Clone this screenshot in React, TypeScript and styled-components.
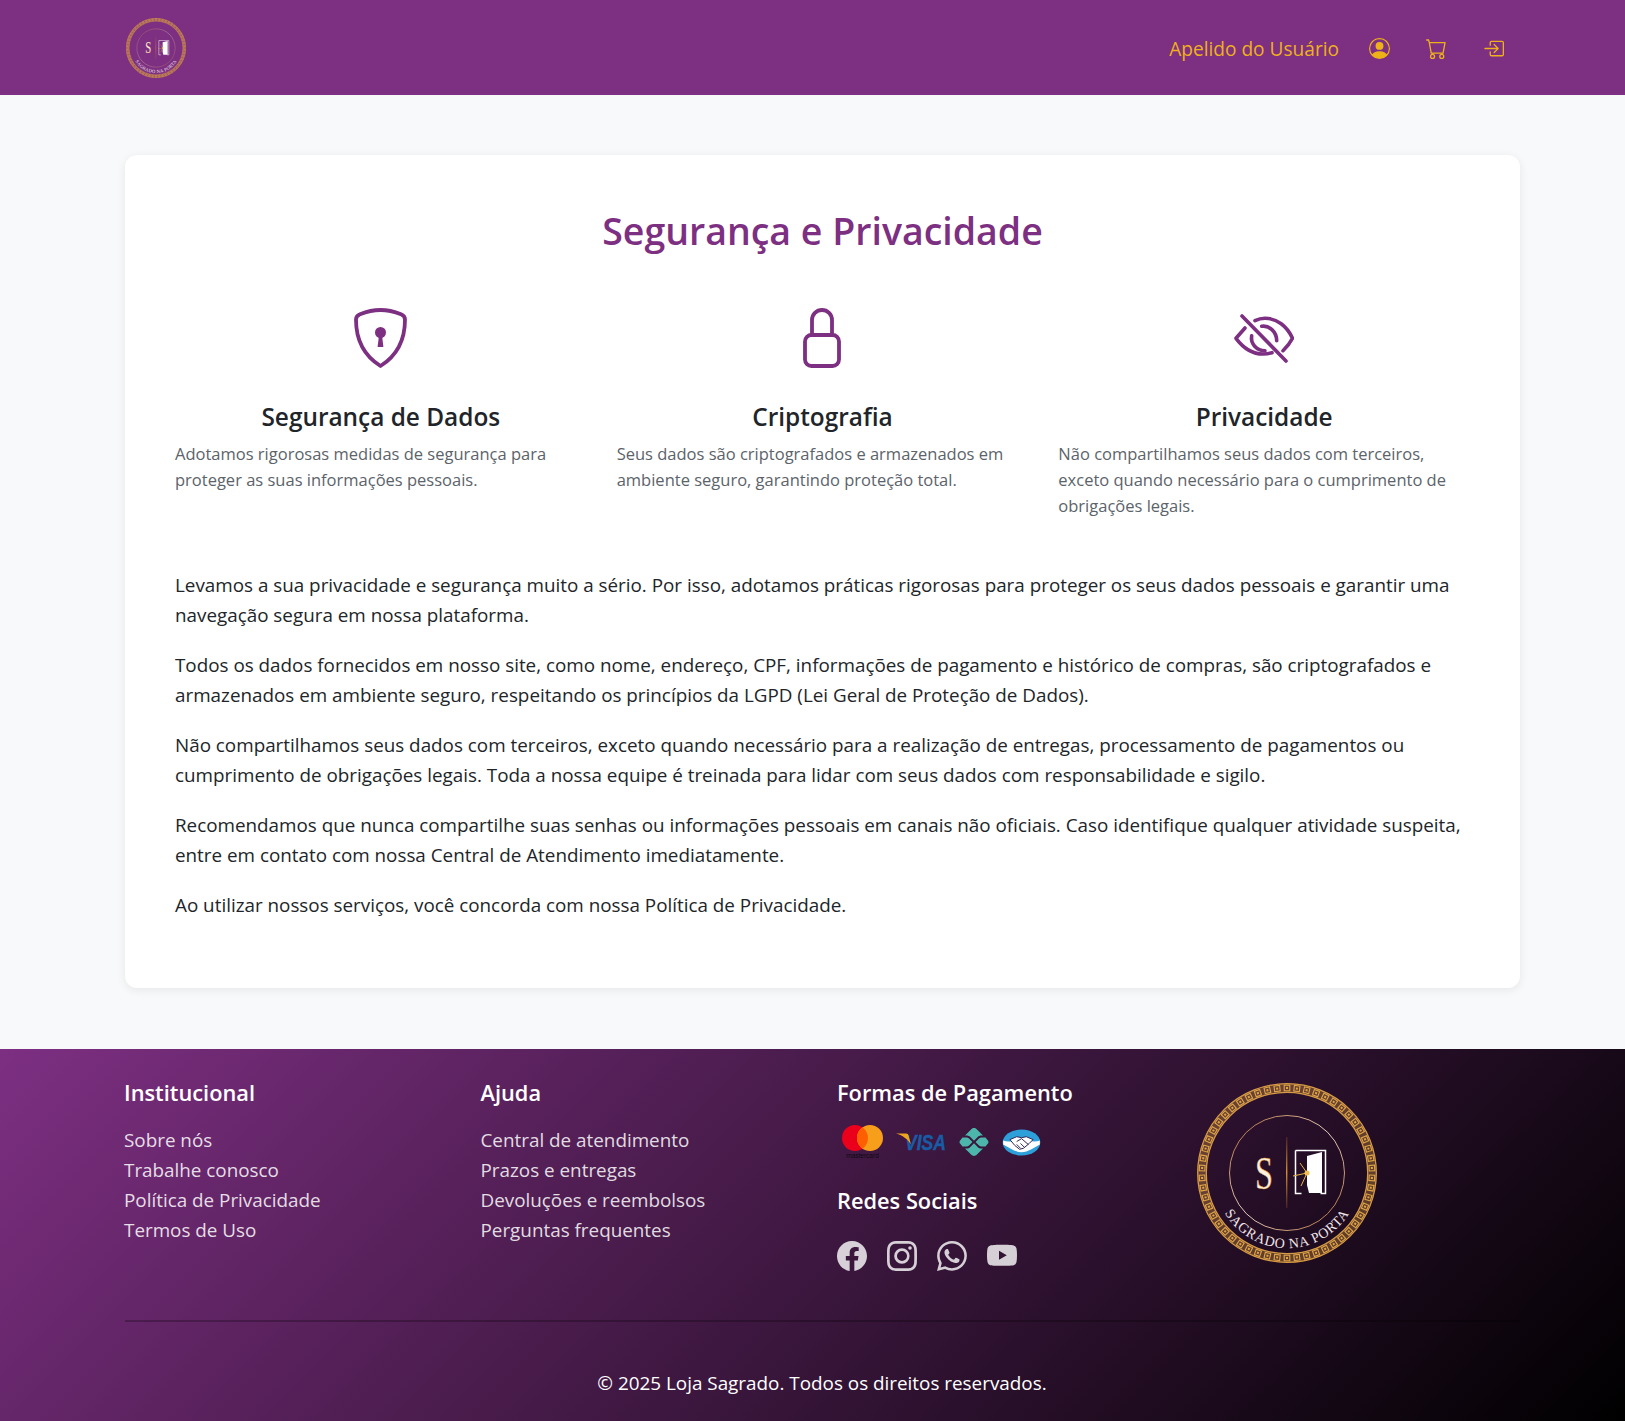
import React, { FC } from 'react';
import styled, { createGlobalStyle } from 'styled-components';
import { BsPersonCircle, BsCart, BsBoxArrowInRight, BsFacebook, BsInstagram, BsWhatsapp, BsYoutube } from 'react-icons/bs';

const GlobalStyle = createGlobalStyle`
  * { box-sizing: border-box; }
  body {
    margin: 0;
    background: #f8f9fa;
    font-family: "Open Sans", "Liberation Sans", sans-serif;
    color: #212529;
  }
`;

const Header = styled.header`
  height: 95px;
  background: #7d2f82;
  display: flex;
  align-items: center;
  justify-content: space-between;
  padding: 0 121px 0 126px;
`;

const HeaderActions = styled.div`
  display: flex;
  align-items: center;
  color: #eeb218;
  font-size: 19.1px;
  gap: 30px;
  margin-top: 2px;
`;

const HeaderIcons = styled.div`
  display: flex;
  align-items: center;
  gap: 36px;
  font-size: 21px;
`;

const Main = styled.main`
  padding: 60px 105px 61px 125px;
`;

const Card = styled.section`
  background: #fff;
  border-radius: 12px;
  box-shadow: 0 2px 10px rgba(0, 0, 0, 0.08);
  padding: 53px 50px 0;
  height: 833px;
`;

const Title = styled.h1`
  margin: 0 0 52px;
  text-align: center;
  color: #7d2f82;
  font-size: 37.5px;
  line-height: 46px;
  font-weight: 600;
`;

const Features = styled.div`
  display: grid;
  grid-template-columns: repeat(3, 1fr);
  gap: 30px;
  margin-bottom: 51px;
`;

const Feature = styled.div``;

const FeatureIcon = styled.div`
  height: 64px;
  display: flex;
  justify-content: center;
  align-items: center;
  margin-bottom: 31px;
`;

const FeatureTitle = styled.h3`
  margin: 0 0 8px;
  text-align: center;
  font-size: 24.4px;
  line-height: 32px;
  font-weight: 600;
`;

const FeatureText = styled.p`
  margin: 0;
  color: #5c636a;
  font-size: 16.5px;
  line-height: 26px;
`;

const Paragraph = styled.p`
  margin: 0 0 20px;
  font-size: 18.83px;
  line-height: 30px;
`;

const Footer = styled.footer`
  height: 372px;
  background: linear-gradient(135deg, #7d2f82, #000);
  padding: 26px 105px 0 124px;
  color: #fff;
`;

const FooterGrid = styled.div`
  display: grid;
  grid-template-columns: repeat(4, 1fr);
  column-gap: 30px;
  height: 245px;
`;

const FooterHeading = styled.h5<{ $top?: number }>`
  margin: ${(p) => p.$top ?? 0}px 0 14px;
  font-size: 21.8px;
  line-height: 36px;
  font-weight: 600;
`;

const FooterList = styled.ul`
  list-style: none;
  margin: 0;
  padding: 0;
`;

const FooterLink = styled.li`
  font-size: 18.85px;
  line-height: 30px;
  color: rgba(255, 255, 255, 0.85);
`;

const Payments = styled.div`
  display: flex;
  align-items: center;
  gap: 13px;
  padding-left: 5px;
  margin-top: 2px;
  height: 34px;
`;

const Socials = styled.div`
  display: flex;
  gap: 20px;
  font-size: 30px;
  margin-top: 22px;
  color: rgba(255, 255, 255, 0.8);
`;

const LogoCell = styled.div`
  padding-left: 3px;
  padding-top: 8px;
`;

const Divider = styled.hr`
  margin: 0 0 0 1px;
  border: 0;
  border-top: 2px solid rgba(0, 0, 0, 0.25);
`;

const Copyright = styled.p`
  margin: 0;
  padding-top: 46px;
  text-align: center;
  font-size: 18.87px;
  line-height: 30px;
`;

const LogoMark: FC<{ size: number }> = ({ size }) => {
  const squares = Array.from({ length: 54 }, (_, i) => (i * 360) / 54);
  const arcId = `logoArc${size}`;
  const ringId = `goldRing${size}`;
  const lineId = `goldLine${size}`;
  return (
    <svg width={size} height={size} viewBox="0 0 180 180">
      <defs>
        <path id={arcId} d="M27 129A73 73 0 0 0 153 129" fill="none" />
        <linearGradient id={ringId} x1="0" y1="0" x2="1" y2="1">
          <stop offset="0" stopColor="#a8642c" />
          <stop offset="0.5" stopColor="#e6d0c0" />
          <stop offset="1" stopColor="#a8642c" />
        </linearGradient>
        <linearGradient id={lineId} x1="0" y1="0" x2="0" y2="1">
          <stop offset="0" stopColor="#c87f24" stopOpacity="0.2" />
          <stop offset="0.5" stopColor="#d98e2c" />
          <stop offset="1" stopColor="#c87f24" stopOpacity="0.2" />
        </linearGradient>
      </defs>
      <circle cx="90" cy="90" r="85" fill="none" stroke="#c48a3a" strokeOpacity="0.4" strokeWidth="9" />
      <circle cx="90" cy="90" r="89.300" fill="none" stroke="#d59a45" strokeWidth="1.300" />
      <circle cx="90" cy="90" r="80.700" fill="none" stroke="#d59a45" strokeWidth="1.300" />
      {squares.map((a) => (
        <g key={a} transform={`rotate(${a} 90 90) translate(90 5)`}>
          <rect x="-2.800" y="-2.800" width="5.600" height="5.600" fill="none" stroke="#e0a548" strokeWidth="1.100" />
          <rect x="-1" y="-1" width="2" height="2" fill="#e0a548" />
        </g>
      ))}
      <circle cx="90" cy="90" r="57.500" fill="none" stroke={`url(#${ringId})`} strokeWidth="1" />
      <text x="58" y="106" fontFamily="Liberation Serif, serif" fontSize="47" fill="#fdf0e0" stroke="#d98e2c" strokeWidth="0.500" textLength="18" lengthAdjust="spacingAndGlyphs">
        S
      </text>
      <rect x="89" y="54" width="1.400" height="71" fill={`url(#${lineId})`} />
      <path d="M98.500 67.500h30v43h-5M98.500 67.500v43h6" fill="none" stroke="#fff" strokeWidth="1.500" />
      <path d="M110 73l15-4v41h-13l-2-8z" fill="#fff" />
      <path d="M96 93l14-3M103 80l7 10M104 103l6-13" stroke="#e6b64a" strokeWidth="1" />
      <circle cx="110" cy="90" r="2.500" fill="#efc04f" />
      <text fontFamily="Liberation Serif, serif" fontSize="14" fill="#efe4e6" letterSpacing="0.700">
        <textPath href={`#${arcId}`} startOffset="50%" textAnchor="middle">
          SAGRADO NA PORTA
        </textPath>
      </text>
    </svg>
  );
};

const ShieldIcon: FC = () => (
  <svg width="53" height="60" viewBox="0 0 53 60" fill="none" stroke="#7d2f82" strokeWidth="3.800">
    <path d="M26.500 2c6 0 13.500 1.500 20.500 4.300 2.400 1 4 2.700 4 5.200 0 22-8.500 36.500-24.500 46.500C10.500 48 2 33.500 2 11.500c0-2.500 1.600-4.200 4-5.200C13 3.500 20.500 2 26.500 2z" strokeLinejoin="round" />
    <circle cx="26.500" cy="24.500" r="5.500" fill="#7d2f82" stroke="none" />
    <path d="M25 27h3l1.400 12h-5.800z" fill="#7d2f82" stroke="none" strokeLinejoin="round" />
  </svg>
);

const LockIcon: FC = () => (
  <svg width="38" height="60" viewBox="0 0 38 60" fill="none" stroke="#7d2f82" strokeWidth="3.800">
    <path d="M9 27V12a10 10 0 0 1 20 0v15" />
    <rect x="2" y="27" width="34" height="31" rx="6.500" />
  </svg>
);

const EyeOffIcon: FC = () => (
  <svg width="60" height="49" viewBox="0 0 60 49" fill="none" stroke="#7d2f82" strokeWidth="3.600" strokeLinecap="round" strokeLinejoin="round">
    <path d="M11 14L2 24.300c6 8 15 15.700 27 15.700 3 0 6-.4 9-1.300" />
    <path d="M21 6.700c3-1.500 6-2.400 10-2.400 12 0 22 8 27.500 20-2 4-5 8-9.500 12.400" />
    <path d="M17.700 21.700c-1.500 8 5 15 13.300 15" />
    <path d="M27.700 12.300c7.300-1.300 15 5.500 15 14.400" />
    <path d="M8 2l44 45" />
  </svg>
);

const MastercardIcon: FC = () => (
  <svg width="41" height="34" viewBox="0 0 41 34">
    <circle cx="13" cy="13" r="13" fill="#eb001b" />
    <circle cx="28" cy="13" r="13" fill="#f79e1b" />
    <path d="M20.500 2.400a13 13 0 0 1 0 21.200a13 13 0 0 1 0-21.200z" fill="#ff5f00" />
    <text x="20.500" y="33" textAnchor="middle" fontFamily="Liberation Sans, sans-serif" fontSize="6.500" fill="#0e0812">
      mastercard
    </text>
  </svg>
);

const VisaIcon: FC = () => (
  <svg width="50" height="24" viewBox="0 0 50 24">
    <text transform="translate(9 20) scale(0.8 1)" fontFamily="Liberation Sans, sans-serif" fontStyle="italic" fontWeight="700" fontSize="22" fill="#175ca5" stroke="#175ca5" strokeWidth="0.400">
      VISA
    </text>
    <path d="M0 3.500h10c1.500 0 2.200.8 2.500 2l2.500 9C12 9.500 7 5.500 0 3.500z" fill="#f0a51e" />
  </svg>
);

const PixIcon: FC = () => (
  <svg width="30" height="30" viewBox="0 0 30 30" fill="#4db6ac">
    <path d="M15 1c1 0 2 .5 2.700 1.200L24 8.500h-1.500c-1.500 0-2.800.5-3.800 1.500L15 13.700 11.300 10c-1-1-2.300-1.500-3.800-1.500H6l6.300-6.300C13 1.500 14 1 15 1z" />
    <path d="M15 29c1 0 2-.5 2.700-1.200L24 21.500h-1.500c-1.500 0-2.800-.5-3.800-1.500L15 16.300 11.300 20c-1 1-2.300 1.500-3.800 1.500H6l6.300 6.300c.7.700 1.700 1.200 2.700 1.200z" />
    <path d="M3.500 10.500h4c1 0 1.900.4 2.500 1l3.500 3.500L10 18.500c-.6.600-1.500 1-2.500 1h-4l-2-2.400c-1.300-1.300-1.300-2.900 0-4.200z" />
    <path d="M26.500 10.500h-4c-1 0-1.900.4-2.500 1L16.500 15l3.500 3.500c.6.600 1.500 1 2.500 1h4l2-2.400c1.300-1.300 1.300-2.900 0-4.200z" />
  </svg>
);

const MercadoPagoIcon: FC = () => (
  <svg width="39" height="27" viewBox="0 0 40 28">
    <ellipse cx="20" cy="14" rx="19.500" ry="13.500" fill="#2d9fd9" />
    <path d="M1 12c6 2 11 .5 19-3 8 3.500 13 5 19 3v4c-6 3-12 8-19 8S7 19 1 16z" fill="#fff" />
    <path d="M8 11l7-3 5 1 5-1 7 3-4 4-6 5-4 1-5-4z" fill="#fff" stroke="#2a2350" strokeWidth="1" strokeLinejoin="round" />
    <path d="M15 13l5-3 7 6M19 20l-4-4M23 19l-4-4" fill="none" stroke="#2a2350" strokeWidth="1" />
  </svg>
);

const features = [
  {
    icon: <ShieldIcon />,
    title: 'Segurança de Dados',
    text: 'Adotamos rigorosas medidas de segurança para proteger as suas informações pessoais.',
  },
  {
    icon: <LockIcon />,
    title: 'Criptografia',
    text: 'Seus dados são criptografados e armazenados em ambiente seguro, garantindo proteção total.',
  },
  {
    icon: <EyeOffIcon />,
    title: 'Privacidade',
    text: 'Não compartilhamos seus dados com terceiros, exceto quando necessário para o cumprimento de obrigações legais.',
  },
];

const paragraphs = [
  'Levamos a sua privacidade e segurança muito a sério. Por isso, adotamos práticas rigorosas para proteger os seus dados pessoais e garantir uma navegação segura em nossa plataforma.',
  'Todos os dados fornecidos em nosso site, como nome, endereço, CPF, informações de pagamento e histórico de compras, são criptografados e armazenados em ambiente seguro, respeitando os princípios da LGPD (Lei Geral de Proteção de Dados).',
  'Não compartilhamos seus dados com terceiros, exceto quando necessário para a realização de entregas, processamento de pagamentos ou cumprimento de obrigações legais. Toda a nossa equipe é treinada para lidar com seus dados com responsabilidade e sigilo.',
  'Recomendamos que nunca compartilhe suas senhas ou informações pessoais em canais não oficiais. Caso identifique qualquer atividade suspeita, entre em contato com nossa Central de Atendimento imediatamente.',
  'Ao utilizar nossos serviços, você concorda com nossa Política de Privacidade.',
];

const App: FC = () => (
  <>
    <GlobalStyle />
    <Header>
      <LogoMark size={60} />
      <HeaderActions>
        <span>Apelido do Usuário</span>
        <HeaderIcons>
          <BsPersonCircle />
          <BsCart />
          <BsBoxArrowInRight />
        </HeaderIcons>
      </HeaderActions>
    </Header>
    <Main>
      <Card>
        <Title>Segurança e Privacidade</Title>
        <Features>
          {features.map((f) => (
            <Feature key={f.title}>
              <FeatureIcon>{f.icon}</FeatureIcon>
              <FeatureTitle>{f.title}</FeatureTitle>
              <FeatureText>{f.text}</FeatureText>
            </Feature>
          ))}
        </Features>
        {paragraphs.map((p) => (
          <Paragraph key={p}>{p}</Paragraph>
        ))}
      </Card>
    </Main>
    <Footer>
      <FooterGrid>
        <div>
          <FooterHeading>Institucional</FooterHeading>
          <FooterList>
            <FooterLink>Sobre nós</FooterLink>
            <FooterLink>Trabalhe conosco</FooterLink>
            <FooterLink>Política de Privacidade</FooterLink>
            <FooterLink>Termos de Uso</FooterLink>
          </FooterList>
        </div>
        <div>
          <FooterHeading>Ajuda</FooterHeading>
          <FooterList>
            <FooterLink>Central de atendimento</FooterLink>
            <FooterLink>Prazos e entregas</FooterLink>
            <FooterLink>Devoluções e reembolsos</FooterLink>
            <FooterLink>Perguntas frequentes</FooterLink>
          </FooterList>
        </div>
        <div>
          <FooterHeading>Formas de Pagamento</FooterHeading>
          <Payments>
            <MastercardIcon />
            <VisaIcon />
            <PixIcon />
            <MercadoPagoIcon />
          </Payments>
          <FooterHeading $top={24}>Redes Sociais</FooterHeading>
          <Socials>
            <BsFacebook />
            <BsInstagram />
            <BsWhatsapp />
            <BsYoutube />
          </Socials>
        </div>
        <LogoCell>
          <LogoMark size={180} />
        </LogoCell>
      </FooterGrid>
      <Divider />
      <Copyright>© 2025 Loja Sagrado. Todos os direitos reservados.</Copyright>
    </Footer>
  </>
);

export default App;
